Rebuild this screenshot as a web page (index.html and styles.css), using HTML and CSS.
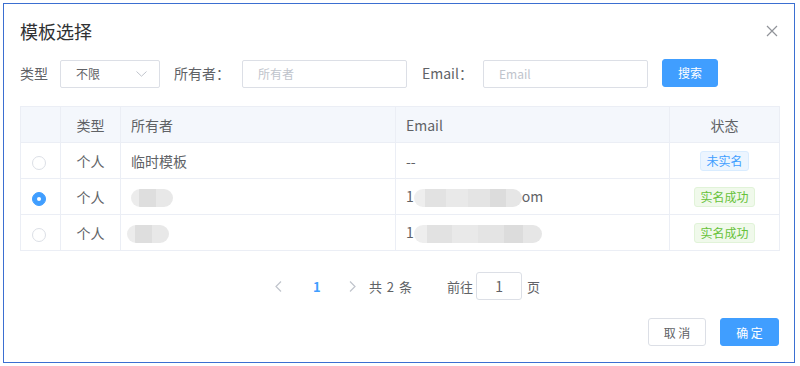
FILE: index.html
```html
<!DOCTYPE html>
<html lang="zh-CN">
<head>
  <meta charset="UTF-8" />
  <title>模板选择</title>
  <link rel="stylesheet" href="styles.css">
</head>
<body>
  <div class="dialog">
    <div class="dialog-header">
      <span class="dialog-title">模板选择</span>
      <span class="close-btn">
        <svg width="12" height="12" viewBox="0 0 12 12"><path d="M1 1L11 11M11 1L1 11" stroke="#909399" stroke-width="1.2" fill="none"/></svg>
      </span>
    </div>

    <div class="filters">
      <span class="label lbl-type">类型</span>
      <div class="select">
        <span>不限</span>
        <svg width="11" height="6" viewBox="0 0 11 6"><path d="M0.5 0.5L5.5 5.2L10.5 0.5" stroke="#c0c4cc" stroke-width="1" fill="none"/></svg>
      </div>
      <span class="label lbl-owner">所有者：</span>
      <div class="input">所有者</div>
      <span class="label lbl-email">Email：</span>
      <div class="input">Email</div>
      <button class="btn btn-primary btn-search">搜索</button>
    </div>

    <table class="table">
      <thead>
        <tr>
          <th class="col-radio"></th>
          <th class="col-type">类型</th>
          <th class="col-owner">所有者</th>
          <th class="col-email">Email</th>
          <th class="col-status">状态</th>
        </tr>
      </thead>
      <tbody>
        <tr>
          <td class="col-radio"><span class="radio"></span></td>
          <td class="col-type">个人</td>
          <td class="col-owner">临时模板</td>
          <td class="col-email">--</td>
          <td class="col-status"><span class="tag tag-blue">未实名</span></td>
        </tr>
        <tr>
          <td class="col-radio"><span class="radio checked"></span></td>
          <td class="col-type">个人</td>
          <td class="col-owner"><span class="blur blur-name"></span></td>
          <td class="col-email">1<span class="blur blur-mail"></span>om</td>
          <td class="col-status"><span class="tag tag-green">实名成功</span></td>
        </tr>
        <tr>
          <td class="col-radio"><span class="radio"></span></td>
          <td class="col-type">个人</td>
          <td class="col-owner"><span class="blur blur-name shift"></span></td>
          <td class="col-email">1<span class="blur blur-mail-long"></span></td>
          <td class="col-status"><span class="tag tag-green">实名成功</span></td>
        </tr>
      </tbody>
    </table>

    <div class="pagination">
      <span class="page-btn disabled">
        <svg width="7" height="11" viewBox="0 0 7 11"><path d="M6 0.5L1 5.5L6 10.5" stroke="#c0c4cc" stroke-width="1.2" fill="none"/></svg>
      </span>
      <span class="pager active">1</span>
      <span class="page-btn disabled">
        <svg width="7" height="11" viewBox="0 0 7 11"><path d="M1 0.5L6 5.5L1 10.5" stroke="#c0c4cc" stroke-width="1.2" fill="none"/></svg>
      </span>
      <span class="total">共 2 条</span>
      <span class="jump">前往<span class="jump-input">1</span>页</span>
    </div>

    <div class="dialog-footer">
      <button class="btn btn-default">取 消</button>
      <button class="btn btn-primary">确 定</button>
    </div>
  </div>
</body>
</html>
```

FILE: styles.css
```css
* {
  box-sizing: border-box;
}

body {
  margin: 0;
  font-family: "Noto Sans CJK SC", "Noto Sans", sans-serif;
  color: #606266;
  background: #fff;
}

.dialog {
  margin: 3px;
  width: 792px;
  height: 360px;
  border: 1px solid #3b6fd1;
  padding: 0 14px 0 16px;
}

.dialog-header {
  display: flex;
  align-items: center;
  justify-content: space-between;
  padding-top: 14px;
  height: 40px;
}

.dialog-title {
  font-size: 18px;
  line-height: 24px;
  color: #303133;
}

.close-btn {
  display: flex;
  margin-right: 2px;
  margin-top: 0;
}

.filters {
  display: flex;
  align-items: center;
  margin-top: 15px;
  height: 29px;
  font-size: 14px;
}

.label {
  color: #606266;
  line-height: 28px;
  margin-top: -2px;
}

.lbl-type { width: 40px; }
.lbl-owner { width: 68px; margin-left: 14px; }
.lbl-email { width: 61px; margin-left: 15px; }

.select,
.input {
  height: 28px;
  border: 1px solid #dcdfe6;
  border-radius: 2px;
  font-size: 12px;
  display: flex;
  align-items: center;
  padding: 0 15px;
}

.select {
  width: 100px;
  justify-content: space-between;
  color: #606266;
  padding-right: 12px;
}

.input {
  width: 165px;
  color: #c0c4cc;
}

.btn {
  font-family: inherit;
  height: 28px;
  border-radius: 3px;
  font-size: 12px;
  padding: 0;
  cursor: pointer;
}

.btn-primary {
  background: #409eff;
  border: 1px solid #409eff;
  color: #fff;
}

.btn-default {
  background: #fff;
  border: 1px solid #dcdfe6;
  color: #606266;
}

.btn-search {
  width: 56px;
  margin-left: 14px;
  margin-top: -2px;
}

.table {
  margin-top: 18px;
  width: 760px;
  border-collapse: collapse;
  font-size: 14px;
  table-layout: fixed;
}

.table th,
.table td {
  border: 1px solid #ebeef5;
  height: 36px;
  padding: 0 10px;
  font-weight: normal;
  text-align: left;
  color: #606266;
  white-space: nowrap;
}

.table th {
  background: #f4f7fc;
}

.table .col-radio { width: 40px; text-align: center; padding: 0; }
.table .col-type { width: 60px; text-align: center; }
.table .col-owner { width: 275px; }
.table .col-email { width: 274px; }
.table .col-status { text-align: center; }

.radio {
  display: inline-block;
  width: 14px;
  height: 14px;
  border: 1px solid #dcdfe6;
  border-radius: 50%;
  vertical-align: middle;
  margin-right: 3px;
  position: relative;
}

.radio.checked {
  background: #409eff;
  border-color: #409eff;
}

.radio.checked::after {
  content: "";
  position: absolute;
  left: 4px;
  top: 4px;
  width: 4px;
  height: 4px;
  border-radius: 50%;
  background: #fff;
}

.tag {
  display: inline-block;
  height: 20px;
  line-height: 18px;
  padding: 0 5px;
  font-size: 12px;
  border-radius: 3px;
  border: 1px solid;
}

.tag-blue {
  background: #ecf5ff;
  border-color: #d9ecff;
  color: #409eff;
}

.tag-green {
  background: #f0f9eb;
  border-color: #e1f3d8;
  color: #67c23a;
}

.blur {
  display: inline-block;
  height: 18px;
  border-radius: 9px;
  vertical-align: middle;
  background: linear-gradient(90deg, #ececec 0, #ececec 20%, #dedede 20%, #dedede 60%, #e8e8e8 60%);
}

.blur-name {
  width: 42px;
}

.blur-name.shift {
  margin-left: -4px;
}

.blur-mail {
  width: 108px;
  background: linear-gradient(90deg, #eeeeee 0, #eeeeee 10%, #e2e2e2 10%, #e2e2e2 30%, #e9e9e9 30%, #e9e9e9 50%, #e4e4e4 50%, #e4e4e4 70%, #dcdcdc 70%, #dcdcdc 85%, #e6e6e6 85%);
}

.blur-mail-long {
  width: 128px;
  background: linear-gradient(90deg, #eeeeee 0, #eeeeee 10%, #e2e2e2 10%, #e2e2e2 30%, #e9e9e9 30%, #e9e9e9 50%, #e4e4e4 50%, #e4e4e4 70%, #dcdcdc 70%, #dcdcdc 85%, #e6e6e6 85%);
}

.pagination {
  display: flex;
  align-items: center;
  justify-content: center;
  margin-top: 21px;
  height: 28px;
  font-size: 13px;
  color: #606266;
  padding-left: 4px;
}

.page-btn {
  width: 30px;
  height: 28px;
  display: flex;
  align-items: center;
  justify-content: center;
}

.pager {
  width: 30px;
  margin: 0 6px 0 8px;
  text-align: center;
  font-weight: bold;
}

.pager.active {
  color: #409eff;
}

.total {
  margin-left: 1px;
  margin-right: 35px;
  word-spacing: 2px;
}

.jump {
  display: flex;
  align-items: center;
}

.jump-input {
  width: 46px;
  height: 28px;
  margin: 0 5px 0 3px;
  border: 1px solid #dcdfe6;
  border-radius: 3px;
  display: flex;
  align-items: center;
  justify-content: center;
  font-size: 14px;
}

.dialog-footer {
  display: flex;
  justify-content: flex-end;
  gap: 14px;
  margin-top: 18px;
  padding-right: 1px;
}

.dialog-footer .btn {
  width: 58px;
  font-size: 12px;
}

.dialog-footer .btn-primary {
  width: 59px;
}
```
